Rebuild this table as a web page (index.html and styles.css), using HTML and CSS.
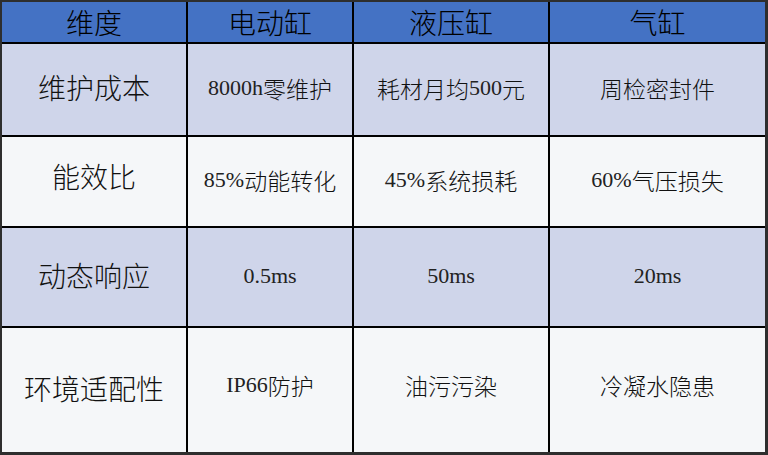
FILE: index.html
```html
<!DOCTYPE html>
<html lang="zh-CN">
<head>
<meta charset="utf-8">
<title>对比表</title>
<link rel="stylesheet" href="styles.css">
</head>
<body>
<div class="frame">
  <div class="grid" role="table">
    <div class="cell head">维度</div>
    <div class="cell head">电动缸</div>
    <div class="cell head">液压缸</div>
    <div class="cell head">气缸</div>

    <div class="cell dim odd">维护成本</div>
    <div class="cell odd"><span class="lat">8000h</span>零维护</div>
    <div class="cell odd">耗材月均<span class="lat">500</span>元</div>
    <div class="cell odd">周检密封件</div>

    <div class="cell dim even lift">能效比</div>
    <div class="cell even"><span class="lat">85%</span>动能转化</div>
    <div class="cell even"><span class="lat">45%</span>系统损耗</div>
    <div class="cell even"><span class="lat">60%</span>气压损失</div>

    <div class="cell dim odd">动态响应</div>
    <div class="cell odd"><span class="lat">0.5ms</span></div>
    <div class="cell odd"><span class="lat">50ms</span></div>
    <div class="cell odd"><span class="lat">20ms</span></div>

    <div class="cell dim even">环境适配性</div>
    <div class="cell even last"><span class="lat">IP66</span>防护</div>
    <div class="cell even last">油污污染</div>
    <div class="cell even last">冷凝水隐患</div>
  </div>
</div>
</body>
</html>
```

FILE: styles.css
```css
html, body {
  margin: 0;
  padding: 0;
  background: #2a2a2a;
}

.frame {
  width: 768px;
  height: 455px;
  box-sizing: border-box;
  border-style: solid;
  border-color: #2e2e2e;
  border-width: 2px 3px 3px 2px;
}

.grid {
  display: grid;
  grid-template-columns: 184px 164px 194px 215px;
  grid-template-rows: 40px 91px 89px 98px 124px;
  gap: 2px;
  background: #000;
  height: 100%;
}

.cell {
  display: flex;
  align-items: center;
  justify-content: center;
  font-family: "Liberation Serif", "Noto Sans CJK SC", serif;
  font-weight: 300;
  font-size: 23px;
  color: #111;
  padding-bottom: 3px;
  box-sizing: border-box;
}

.lat {
  font-weight: 400;
  font-size: 22px;
  color: #222;
}

.head {
  background: #4472c4;
  font-size: 28px;
  color: #000;
  padding-bottom: 1px;
}

.dim {
  font-size: 28px;
  padding-bottom: 5px;
}

.lift {
  padding-bottom: 12px;
}

.last {
  padding-bottom: 10px;
}

.odd {
  background: #cfd5ea;
}

.even {
  background: #f5f7f9;
}
```
